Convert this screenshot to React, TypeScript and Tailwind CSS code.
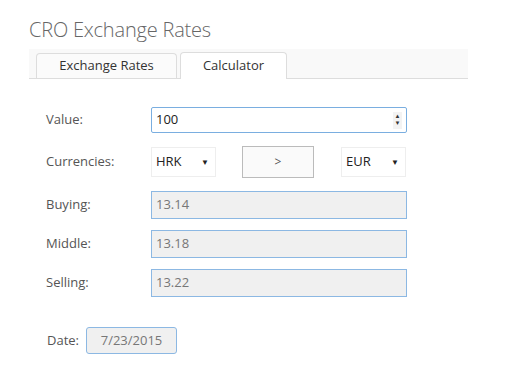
import React from "react";

const Label = ({ text }: { text: string }) => (
  <div className="w-[105px] shrink-0 text-[13px] text-[#555]">{text}</div>
);

const ReadOnly = ({ value }: { value: string }) => (
  <div className="w-[256px] h-[28px] border border-[#8cb8e3] bg-[#f0f0f0] px-[4px] flex items-center text-[13px] text-[#777]">
    {value}
  </div>
);

const Select = ({ value }: { value: string }) => (
  <div className="w-[65px] h-[30px] border border-[#eee] bg-white pl-[4px] pr-[6px] flex items-center justify-between text-[13px] text-[#222]">
    <span>{value}</span>
    <span className="text-[8px] text-[#222]">▼</span>
  </div>
);

export default function App() {
  return (
    <div className="w-[512px] h-[384px] bg-white pl-[29px] pt-[16px] font-['Open_Sans',sans-serif]">
      <h1 className="text-[20px] font-light text-[#666] leading-[28px] tracking-[-0.2px]">CRO Exchange Rates</h1>
      <div className="mt-[5px] w-[439px] h-[30px] bg-[#f9f9f9] border-b border-[#ddd] flex items-end pl-[7px] gap-[3px]">
        <div className="w-[141px] h-[25px] border border-b-0 border-[#ddd] rounded-t-[4px] bg-[#fbfbfb] flex items-center justify-center text-[13px] text-[#333]">
          Exchange Rates
        </div>
        <div className="w-[107px] h-[27px] -mb-px border border-b-0 border-[#ddd] rounded-t-[4px] bg-white flex items-center justify-center text-[13px] text-[#333]">
          Calculator
        </div>
      </div>

      <div className="pl-[17px] pt-[28px] flex flex-col">
        <div className="flex items-center">
          <Label text="Value:" />
          <div className="w-[256px] h-[26px] border border-[#7aaee0] rounded-[2px] bg-white pl-[4px] pr-[4px] flex items-center justify-between text-[13px] text-[#222]">
            <span>100</span>
            <div className="w-[9px] h-[17px] bg-[#f3f3f3] flex flex-col items-center justify-center text-[6px] leading-[7px] text-[#333]">
              <span>▲</span>
              <span>▼</span>
            </div>
          </div>
        </div>

        <div className="flex items-center mt-[13px]">
          <Label text="Currencies:" />
          <Select value="HRK" />
          <div className="ml-[26px] w-[72px] h-[32px] border border-[#bbb] bg-[#fafafa] flex items-center justify-center text-[12px] text-[#555]">
            &gt;
          </div>
          <div className="ml-[27px]">
            <Select value="EUR" />
          </div>
        </div>

        <div className="flex items-center mt-[13px]">
          <Label text="Buying:" />
          <ReadOnly value="13.14" />
        </div>
        <div className="flex items-center mt-[11px]">
          <Label text="Middle:" />
          <ReadOnly value="13.18" />
        </div>
        <div className="flex items-center mt-[11px]">
          <Label text="Selling:" />
          <ReadOnly value="13.22" />
        </div>

        <div className="flex items-center mt-[30px] pl-[1px]">
          <div className="w-[39px] text-[13px] text-[#555]">Date:</div>
          <div className="w-[91px] h-[27px] border border-[#8cb8e3] rounded-[3px] bg-[#f0f0f0] flex items-center justify-center text-[13px] text-[#777]">
            7/23/2015
          </div>
        </div>
      </div>
    </div>
  );
}
